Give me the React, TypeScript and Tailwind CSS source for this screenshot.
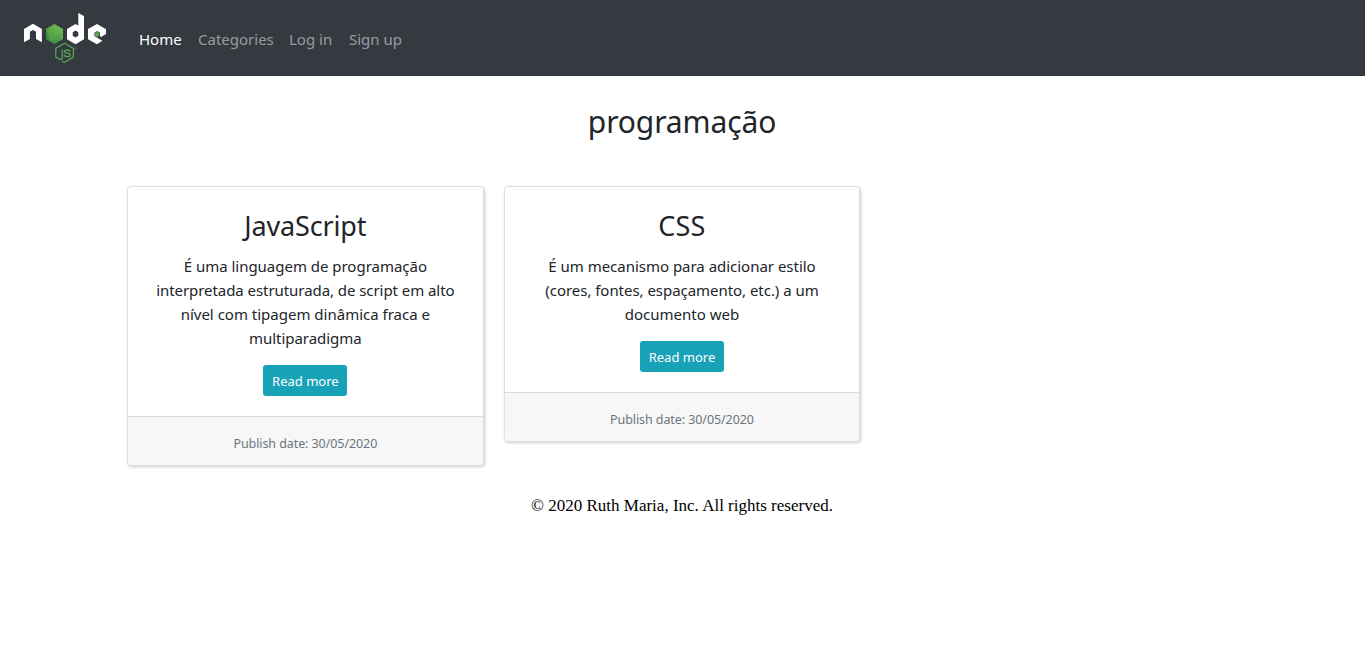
type Post = { title: string; titleTracking: string; lines: { text: string; tracking: string }[] };

const posts: Post[] = [
  {
    title: "JavaScript",
    titleTracking: "tracking-[-0.15px]",
    lines: [
      { text: "É uma linguagem de programação", tracking: "tracking-[-0.02px]" },
      { text: "interpretada estruturada, de script em alto", tracking: "tracking-[-0.06px]" },
      { text: "nível com tipagem dinâmica fraca e", tracking: "tracking-normal" },
      { text: "multiparadigma", tracking: "tracking-[-0.05px]" },
    ],
  },
  {
    title: "CSS",
    titleTracking: "tracking-[0.2px]",
    lines: [
      { text: "É um mecanismo para adicionar estilo", tracking: "tracking-[-0.02px]" },
      { text: "(cores, fontes, espaçamento, etc.) a um", tracking: "tracking-[-0.04px]" },
      { text: "documento web", tracking: "tracking-normal" },
    ],
  },
];

function NodeLogo() {
  return (
    <svg width="84" height="52" viewBox="23 12 84 52" aria-label="Node.js">
      <defs>
        <linearGradient id="hex" x1="0" y1="1" x2="1" y2="0">
          <stop offset="0" stopColor="#3f873f" />
          <stop offset="0.4" stopColor="#4a9a45" />
          <stop offset="1" stopColor="#7cc05c" />
        </linearGradient>
      </defs>
      <path fill="#fff" d="M24 42.3V28.9L33 23.7L41.9 28.9V42.3L36 39V31.8L33 30L29.9 31.8V39Z" />
      <path fill="url(#hex)" d="M54.4 24L63 29V39L54.4 44L46 39V29Z" />
      <path fill="#6cb854" d="M54.4 24L63 29L50 42L46 29Z" opacity=".35" />
      <path fill="#3c8b3d" d="M46 29L50.5 41.8L46 39Z" opacity=".8" />
      <path fill="#fff" fillRule="evenodd" d="M78.3 13L84 16V39.2L75.5 44.2L67 39.2V29L75.5 24L78.3 25.6ZM75.5 30.5L72.7 32.2V35.8L75.5 37.5L78.3 35.8V32.2Z" />
      <path fill="#fff" d="M97 24L106 29.2V34L101 37L100 36.3V32.7L97.2 31L94.4 32.7V36.1L102.4 40.8L97 44.2L88 39.2V29Z" />
      <path fill="#5fa64e" d="M97.2 31.8L99.4 33.1V35.6L97.2 36.9L95 35.6V33.1Z" />
      <path fill="none" stroke="#58a253" strokeWidth="1.3" d="M62 61.1L64.6 62.2L73.4 57.1V48.4L64.6 43.3L55.8 48.4V57.1L59.6 59.1Q62.3 60 62.3 57.4V49.4" />
      <path fill="none" stroke="#58a253" strokeWidth="1.3" d="M70 51.6Q69.8 50 67.2 50Q64.6 50 64.6 51.5Q64.6 52.8 67.3 53.1Q70.3 53.4 70.3 55Q70.3 56.6 67.4 56.6Q64.4 56.6 64.2 54.6" />
      <circle cx="75.8" cy="48.5" r=".9" fill="none" stroke="#527552" strokeWidth=".6" />
    </svg>
  );
}

function Card({ post }: { post: Post }) {
  return (
    <article className="overflow-hidden rounded-[4px] border border-[#dfdfdf] bg-white text-center shadow-[1px_1px_3px_#ccc]">
      <div className="px-5 pb-5 pt-[22px]">
        <h3 className={`mb-3 text-[27px] leading-[33px] ${post.titleTracking}`}>{post.title}</h3>
        <p className="mb-[15px] text-[15px] leading-6">
          {post.lines.map((l) => (
            <span key={l.text} className={`block whitespace-nowrap ${l.tracking}`}>{l.text} </span>
          ))}
        </p>
        <a href="#" className="mx-auto flex h-[31px] w-[84px] items-center justify-center whitespace-nowrap rounded-[3px] bg-[#17a2b8] pt-[2px] text-[13px] text-white">Read more</a>
      </div>
      <footer className="h-[49px] border-t border-[#d9d9d9] bg-[#f7f7f7] pt-[15px] text-[12.5px] leading-6 tracking-[-0.08px] text-[#6c757d]">
        Publish date: 30/05/2020
      </footer>
    </article>
  );
}

export default function App() {
  return (
    <div className="min-h-[655px] bg-white font-['Noto_Sans','Open_Sans',sans-serif] text-[#212529]">
      <nav className="flex h-[76px] items-start bg-[#343a40] pl-[23px] pt-3">
        <NodeLogo />
        <ul className="ml-8 flex gap-4 pt-[15px] text-[15px] leading-6 text-[#999c9f]">
          <li className="w-[43px] whitespace-nowrap text-white">Home</li>
          <li className="w-[75px] whitespace-nowrap">Categories</li>
          <li className="w-[44px] whitespace-nowrap">Log in</li>
          <li className="whitespace-nowrap">Sign up</li>
        </ul>
      </nav>
      <main className="ml-[127px] w-[1110px]">
        <h2 className="pt-[27px] text-center text-[30px] leading-[38px] tracking-[-0.12px]">programação</h2>
        <div className="mt-[45px] grid grid-cols-3 items-start gap-5">
          {posts.map((p) => (
            <Card key={p.title} post={p} />
          ))}
        </div>
      </main>
      <p className="mt-[28px] w-[1364px] text-center font-['Liberation_Serif',serif] text-[17px] leading-6 text-black">© 2020 Ruth Maria, Inc. All rights reserved.</p>
    </div>
  );
}
